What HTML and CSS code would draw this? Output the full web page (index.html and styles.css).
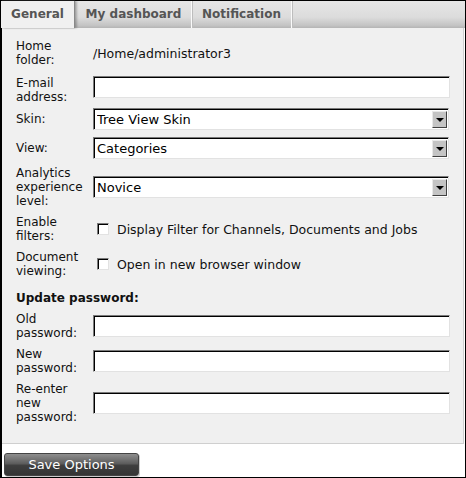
FILE: index.html
```html
<!DOCTYPE html>
<html lang="en">
<head>
<meta charset="UTF-8">
<title>Options</title>
<link rel="stylesheet" href="styles.css">
</head>
<body>

<div class="window">
    <div class="tabs">
        <div class="tab active">General</div>
        <div class="tab dash">My dashboard</div>
        <div class="tab notify">Notification</div>
    </div>

    <div class="panel">
        <div class="form">
            <label class="label home">Home folder:</label>
            <div class="value home">/Home/administrator3</div>

            <label class="label top">E-mail address:</label>
            <input class="text top" type="text">

            <label class="label">Skin:</label>
            <div class="select">
                <select><option>Tree View Skin</option></select>
                <span class="arrow"></span>
            </div>

            <label class="label">View:</label>
            <div class="select">
                <select><option>Categories</option></select>
                <span class="arrow"></span>
            </div>

            <label class="label">Analytics experience level:</label>
            <div class="select">
                <select><option>Novice</option></select>
                <span class="arrow"></span>
            </div>

            <label class="label">Enable filters:</label>
            <div class="check"><input type="checkbox"> Display Filter for Channels, Documents and Jobs</div>

            <label class="label">Document viewing:</label>
            <div class="check"><input type="checkbox"> Open in new browser window</div>

            <div class="section">Update password:</div>

            <label class="label">Old password:</label>
            <input class="text" type="password">

            <label class="label">New password:</label>
            <input class="text" type="password">

            <label class="label">Re-enter new password:</label>
            <input class="text" type="password">
        </div>
    </div>

    <div class="footer">
        <button class="save">Save Options</button>
    </div>
</div>

</body>
</html>
```

FILE: styles.css
```css
body {
    margin: 0;
    font-family: "DejaVu Sans", Verdana, sans-serif;
    font-size: 12px;
    color: #111;
}
.window {
    width: 466px;
    height: 478px;
    box-sizing: border-box;
    border: 1px solid #000;
    border-left-width: 2px;
    background: #fff;
    display: flex;
    flex-direction: column;
}

/* Tabs */
.tabs {
    display: flex;
    height: 27px;
    margin-left: -1px;
    background: linear-gradient(to bottom, #e6e6e6, #dcdcdc 60%, #c4c4c4 90%, #b4b4b4);
}
.tab {
    box-sizing: border-box;
    white-space: nowrap;
    text-align: center;
    line-height: 27px;
    font-weight: bold;
    color: #555;
    border-right: 1px solid #fafafa;
    box-shadow: 1px 0 0 #bdbdbd;
}
.tab.active {
    width: 73px;
    background: #f0f0f0;
    border-right: none;
    box-shadow: 1px 0 1px #888, 3px 0 2px rgba(0, 0, 0, 0.25);
    position: relative;
    z-index: 1;
}
.tab.dash {
    width: 118px;
    padding-left: 2px;
}
.tab.notify {
    width: 100px;
}

/* Panel */
.panel {
    background: #f0f0f0;
    border-right: 1px solid #cfcfcf;
    border-bottom: 1px solid #cfcfcf;
    margin-right: 1px;
    padding: 11px 14px 19px 14px;
}
.form {
    display: grid;
    grid-template-columns: 77px 1fr;
    row-gap: 7px;
    align-items: center;
}
.label {
    line-height: 14px;
    padding-right: 6px;
}
.home {
    margin-bottom: 2px;
}
.top {
    align-self: start;
    margin-bottom: -3px;
}
.value {
    font-size: 12.5px;
}
.section {
    grid-column: 1 / 3;
    font-weight: bold;
    line-height: 14px;
    margin-top: 6px;
}

input.text {
    height: 22px;
    width: 357px;
    box-sizing: border-box;
    margin: 0;
    border: 1px solid;
    border-color: #7a7a7a #e2e2e2 #e2e2e2 #7a7a7a;
    box-shadow: inset 1px 1px 0 #000;
    background: #fff;
}

.select {
    display: flex;
    align-items: center;
    height: 22px;
    width: 356px;
    box-sizing: border-box;
    border: 1px solid;
    border-color: #7a7a7a #e2e2e2 #e2e2e2 #7a7a7a;
    box-shadow: inset 1px 1px 0 #000;
    background: #fff;
    padding: 1px 1px 1px 2px;
}
.select select {
    flex: 1;
    appearance: none;
    -webkit-appearance: none;
    border: none;
    background: transparent;
    font-family: "DejaVu Sans", Verdana, sans-serif;
    font-size: 13px;
    color: #000;
    padding: 0 0 0 1px;
    outline: none;
}
.arrow {
    width: 15px;
    height: 17px;
    box-sizing: border-box;
    background: #c4c4c4;
    border: 1px solid;
    border-color: #e8e8e8 #404040 #404040 #e8e8e8;
    display: flex;
    align-items: center;
    justify-content: center;
}
.arrow::after {
    content: "";
    border-left: 4px solid transparent;
    border-right: 4px solid transparent;
    border-top: 4px solid #000;
    margin-top: 1px;
}

.check {
    display: flex;
    align-items: center;
    font-size: 12.5px;
}
.check input {
    appearance: none;
    -webkit-appearance: none;
    width: 12px;
    height: 12px;
    box-sizing: border-box;
    margin: 0 8px 0 4px;
    border: 1px solid;
    border-color: #7a7a7a #e2e2e2 #e2e2e2 #7a7a7a;
    box-shadow: inset 1px 1px 0 #000;
    background: #fff;
}

/* Footer */
.footer {
    padding: 9px 0 0 2px;
}
.save {
    width: 135px;
    height: 23px;
    border: 1px solid #444;
    border-radius: 3px;
    background: linear-gradient(to bottom, #8e8e8e, #5e5e5e 45%, #3e3e3e 55%, #353535);
    box-shadow: 1px 1px 0 #ccc;
    color: #fff;
    font-family: "DejaVu Sans", Verdana, sans-serif;
    font-size: 13px;
    padding: 0;
    cursor: pointer;
}
```
